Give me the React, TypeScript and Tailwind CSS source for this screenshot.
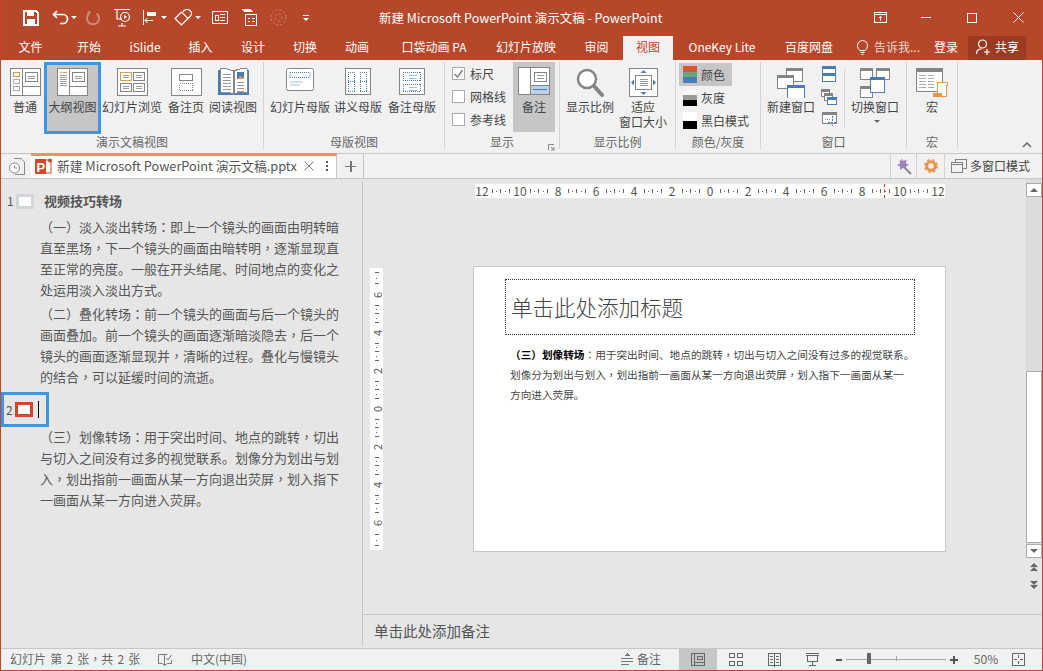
import React from "react"

const G = "#848484"
const O = "#e8964a"
const B = "#4a7db8"
const W = "#ffffff"

const Ico = ({ w, h, children, soft }: { w: number; h: number; children: React.ReactNode; soft?: boolean }) => (
  <svg width={w} height={h} viewBox={`0 0 ${w} ${h}`} fill="none" shapeRendering={soft ? undefined : "crispEdges"} className="block shrink-0">
    {children}
  </svg>
)

const Lines = ({ x, y, w, n, c = G, gap = 2 }: { x: number; y: number; w: number; n: number; c?: string; gap?: number }) => (
  <>
    {Array.from({ length: n }).map((_, i) => (
      <path key={i} d={`M${x} ${y + i * gap + 0.5}h${w}`} stroke={c} />
    ))}
  </>
)

const Dots = ({ d, c = B }: { d: string; c?: string }) => <path d={d} stroke={c} strokeDasharray="1 1" />

// the reference has its commas, colons and brackets centred in the cell, as the TC cut does
const Punct = ({ text }: { text: string }) => (
  <>
    {text.split(/([，：（）])/).map((part, i) =>
      i % 2 === 1 ? (
        <span key={i} className="[font-family:'Noto_Sans_CJK_TC',sans-serif]">
          {part}
        </span>
      ) : (
        part
      ),
    )}
  </>
)

const NormalIcon = () => (
  <Ico w={31} h={28}>
    <rect x=".5" y=".5" width="30" height="27" fill={W} stroke={G} />
    <path d="M12.5 1v26M13 18.5h17" stroke={G} />
    <rect x="3.5" y="4.5" width="6" height="4" stroke={O} />
    <rect x="3.5" y="11.5" width="6" height="4" stroke="#aaa" />
    <rect x="3.5" y="18.5" width="6" height="4" stroke="#aaa" />
    <rect x="15.5" y="4.5" width="12" height="9" stroke={G} />
    <Lines x={18} y={8} w={7} n={2} c="#999" />
  </Ico>
)

const OutlineIcon = () => (
  <Ico w={31} h={28}>
    <rect x=".5" y=".5" width="30" height="27" fill={W} stroke={G} />
    <path d="M12.5 1v26M13 18.5h17" stroke={G} />
    <path d="M3 4.5h2" stroke={O} />
    <path d="M6 4.5h4" stroke={O} />
    <Lines x={3} y={7} w={7} n={6} c="#999" />
    <rect x="15.5" y="4.5" width="12" height="9" stroke={G} />
    <Lines x={18} y={8} w={7} n={2} c="#999" />
  </Ico>
)

const SorterIcon = () => (
  <Ico w={31} h={28}>
    <rect x=".5" y=".5" width="30" height="27" fill={W} stroke={G} />
    <rect x="3.5" y="4.5" width="11" height="8" stroke={O} />
    <rect x="16.5" y="4.5" width="11" height="8" stroke={G} />
    <rect x="3.5" y="15.5" width="11" height="8" stroke={G} />
    <rect x="16.5" y="15.5" width="11" height="8" stroke={G} />
    <Lines x={6} y={7} w={6} n={2} c="#999" />
    <Lines x={19} y={7} w={6} n={2} c="#999" />
    <Lines x={6} y={18} w={6} n={2} c="#999" />
    <Lines x={19} y={18} w={6} n={2} c="#999" />
  </Ico>
)

const NotesPageIcon = () => (
  <Ico w={31} h={28}>
    <rect x=".5" y=".5" width="30" height="27" fill={W} stroke={G} />
    <rect x="8.5" y="6.5" width="13" height="6" stroke={G} />
    <rect x="8.5" y="15.5" width="13" height="7" stroke={G} strokeDasharray="1 1" />
  </Ico>
)

const ReadIcon = () => (
  <Ico w={31} h={28}>
    <path d="M0 2h31v25H0z" fill={B} />
    <path d="M2 1c4-1 9 0 13 2v23c-4-2-9-2-13-1zM29 1c-4-1-9 0-13 2v23c4-2 9-2 13-1z" fill={W} stroke={G} />
    <Lines x={5} y={6} w={8} n={7} c="#999" gap={3} />
    <Lines x={19} y={14} w={7} n={4} c="#999" gap={3} />
    <path d="M19 4h7v7h-7z" fill={B} />
    <path d="M19 11l3-3 2 2 2-2v3z" fill={O} />
  </Ico>
)

const MasterIcon = () => (
  <Ico w={28} h={24} soft>
    <rect x=".5" y=".5" width="27" height="22" rx="2" fill={W} stroke={G} />
    <Dots d="M4 4.5h20M4 9.5h20M4 4.5v5M24 4.5v5" />
    <path d="M4 14h13M4 17h10" stroke="#9fbfe0" />
  </Ico>
)

const HandoutIcon = () => (
  <Ico w={26} h={28}>
    <rect x=".5" y=".5" width="25" height="26" fill={W} stroke={G} />
    <Dots d="M3.5 4v20M9.5 4v20M15.5 4v20M21.5 4v20M3 4.5h7M15 4.5h7M3 13.5h7M15 13.5h7M3 23.5h7M15 23.5h7" />
  </Ico>
)

const NotesMasterIcon = () => (
  <Ico w={26} h={28}>
    <rect x=".5" y=".5" width="25" height="26" fill={W} stroke={G} />
    <Dots d="M4 4.5h18M4 12.5h18M4 16.5h18M4 23.5h18M4.5 4v9M21.5 4v9M4.5 16v8M21.5 16v8" />
    <Lines x={10} y={7} w={8} n={2} c="#9fbfe0" gap={3} />
    <Lines x={10} y={19} w={8} n={2} c="#9fbfe0" gap={3} />
  </Ico>
)

const NotesIcon = () => (
  <Ico w={32} h={28}>
    <rect x=".5" y=".5" width="31" height="27" fill={W} stroke={G} />
    <path d="M12.5 1v26" stroke={G} />
    <rect x="13" y="19" width="18" height="8" fill="#bcd0e6" />
    <path d="M13 18.5h18" stroke={G} />
    <path d="M15 22.5h14" stroke={B} />
    <rect x="16.5" y="5.5" width="12" height="9" stroke={G} />
    <Lines x={19} y={8} w={7} n={2} c="#999" gap={3} />
  </Ico>
)

const ZoomIcon = () => (
  <Ico w={28} h={30} soft>
    <circle cx="11" cy="11" r="9" fill={W} stroke={G} strokeWidth="2.5" />
    <path d="M18 18l8 9" stroke={G} strokeWidth="4" strokeLinecap="round" />
  </Ico>
)

const FitIcon = () => (
  <Ico w={29} h={30}>
    <rect x=".5" y=".5" width="28" height="28" fill={W} stroke={G} />
    <rect x="6.5" y="7.5" width="16" height="14" stroke={G} />
    <Lines x={11} y={11} w={8} n={4} c="#999" gap={2} />
    <path d="M14.5 2l3 3h-6zM14.5 27l3-3h-6zM2 14.5l3-3v6zM27 14.5l-3-3v6z" fill={B} shapeRendering="auto" />
  </Ico>
)

const Swatch = ({ a, b, c, half }: { a: string; b: string; c: string; half?: boolean }) => (
  <span className="flex h-[17px] w-[14px] shrink-0 flex-col">
    <span className="flex-1" style={{ background: a }} />
    {!half && <span className="flex-1" style={{ background: b }} />}
    <span className="flex-1" style={{ background: c }} />
  </span>
)

const Win = ({ x, y, w, h, blue }: { x: number; y: number; w: number; h: number; blue?: boolean }) => (
  <>
    <rect x={x + 0.5} y={y + 0.5} width={w - 1} height={h - 1} fill={W} stroke={blue ? B : G} />
    <rect x={x} y={y} width={w} height={3} fill={blue ? B : G} />
  </>
)

const NewWindowIcon = () => (
  <Ico w={28} h={30}>
    <Win x={9} y={0} w={17} h={14} />
    <Win x={0} y={7} w={17} h={14} />
    <Win x={10} y={17} w={18} h={14} blue />
  </Ico>
)

const SwitchIcon = () => (
  <Ico w={30} h={30}>
    <Win x={0} y={0} w={13} h={12} />
    <Win x={16} y={0} w={14} h={12} />
    <Win x={0} y={18} w={13} h={12} />
    <Win x={10} y={9} w={15} h={16} blue />
  </Ico>
)

const MacroIcon = () => (
  <Ico w={32} h={30}>
    <rect x=".5" y=".5" width="26" height="23" fill={W} stroke={G} />
    <rect x="0" y="0" width="27" height="4" fill={G} />
    <Lines x={3} y={7} w={7} n={5} c="#aaa" gap={3} />
    <Lines x={12} y={7} w={6} n={5} c="#aaa" gap={3} />
    <path d="M21 14h10v3h-1v11H19v-3h2z" fill={W} stroke={O} />
    <path d="M17 25h9v4h-9z" fill={O} />
  </Ico>
)

const RibbonBtn = ({ icon, label, w, active, second }: { icon: React.ReactNode; label: string; w: number; active?: boolean; second?: string }) => (
  <div
    className={`flex h-[72px] shrink-0 flex-col items-center pt-[6px] whitespace-nowrap ${active ? "bg-[#c6c6c6] shadow-[inset_0_0_0_3px_#3a97e6]" : ""}`}
    style={{ width: w }}
  >
    <div className="flex h-[28px] items-start justify-center">{icon}</div>
    <span className="mt-[3px] leading-[15px]">{label}</span>
    {second && <span className="leading-[15px]">{second}</span>}
  </div>
)

const Group = ({ w, label, children, pl = 0 }: { w: number; label: string; children: React.ReactNode; pl?: number }) => (
  <div className="flex h-[87px] shrink-0 flex-col border-r border-[#d4d4d4]" style={{ width: w }}>
    <div className="flex h-[72px]" style={{ paddingLeft: pl }}>
      {children}
    </div>
    <div className="mt-px text-center leading-[14px] text-[#666]">{label}</div>
  </div>
)

const Check = ({ label, checked }: { label: string; checked?: boolean }) => (
  <div className="flex h-[23px] items-center gap-[5px] whitespace-nowrap">
    <span className="flex h-[13px] w-[13px] items-center justify-center border border-[#ababab] bg-white">
      {checked && (
        <svg width="11" height="11" viewBox="0 0 11 11" fill="none">
          <path d="M1.5 6l3 3 5-7" stroke="#777" strokeWidth="1.3" />
        </svg>
      )}
    </span>
    {label}
  </div>
)

const ColorRow = ({ label, a, b, c, active, half }: { label: string; a: string; b: string; c: string; active?: boolean; half?: boolean }) => (
  <div className={`flex h-[23px] w-[53px] items-center gap-[4px] whitespace-nowrap pl-[4px] ${active ? "bg-[#c6c6c6]" : ""}`}>
    <Swatch a={a} b={b} c={c} half={half} />
    {label}
  </div>
)

const tabs: [string, number][] = [
  ["文件", 59],
  ["开始", 58],
  ["iSlide", 54],
  ["插入", 57],
  ["设计", 48],
  ["切换", 56],
  ["动画", 48],
  ["口袋动画 PA", 106],
  ["幻灯片放映", 78],
]

const Ticks = ({ vertical, n = 5 }: { vertical?: boolean; n?: number }) => (
  <div className={`flex flex-1 items-center justify-evenly ${vertical ? "flex-col" : ""}`}>
    {Array.from({ length: n }).map((_, i) =>
      vertical ? (
        <span key={i} className={`h-px bg-[#666] ${i % 2 === 1 ? "w-[1px]" : "w-[4px]"}`} />
      ) : (
        <span key={i} className={`w-px bg-[#666] ${i % 2 === 1 ? "h-[1px]" : "h-[4px]"}`} />
      ),
    )}
  </div>
)

const hLabels = ["12", "10", "8", "6", "4", "2", "0", "2", "4", "6", "8", "10", "12"]
const vLabels = ["6", "4", "2", "0", "2", "4", "6"]

const ViewBtn = ({ active, children }: { active?: boolean; children: React.ReactNode }) => (
  <div className={`flex h-full w-[38px] items-center justify-center ${active ? "bg-[#c6c6c6]" : ""}`}>{children}</div>
)

const outline1 = [
  "（一）淡入淡出转场：即上一个镜头的画面由明转暗",
  "直至黑场，下一个镜头的画面由暗转明，逐渐显现直",
  "至正常的亮度。一般在开头结尾、时间地点的变化之",
  "处运用淡入淡出方式。",
]
const outline2 = [
  "（二）叠化转场：前一个镜头的画面与后一个镜头的",
  "画面叠加。前一个镜头的画面逐渐暗淡隐去，后一个",
  "镜头的画面逐渐显现并，清晰的过程。叠化与慢镜头",
  "的结合，可以延缓时间的流逝。",
]
const outline3 = [
  "（三）划像转场：用于突出时间、地点的跳转，切出",
  "与切入之间没有过多的视觉联系。划像分为划出与划",
  "入，划出指前一画面从某一方向退出荧屏，划入指下",
  "一画面从某一方向进入荧屏。",
]

const Para = ({ lines }: { lines: string[] }) => (
  <div className="pl-[39px] text-[13px] leading-[21px] whitespace-nowrap text-[#555]">
    {lines.map((l) => (
      <div key={l}>
        <Punct text={l} />
      </div>
    ))}
  </div>
)

const Caret = () => <span className="h-0 w-0 border-x-[3px] border-t-[3px] border-x-transparent border-t-white" />

export default function App() {
  return (
    <div className="flex h-[671px] w-[1043px] flex-col overflow-hidden border-x border-b border-[#c8432a] bg-[#e6e6e6] text-[12px] text-[#444] [font-family:'Noto_Sans_CJK_SC','Noto_Sans',sans-serif]">
      {/* title bar */}
      <div className="relative flex h-[35px] shrink-0 items-center bg-[#b7472a] pl-[22px] text-white">
        <Ico w={16} h={16}>
          <path d="M1 1h12l2 2v12H1z" stroke={W} strokeWidth="1.5" />
          <path d="M4 1h7v5H4zM4 9h8v6H4z" fill={W} />
        </Ico>
        <span className="ml-[13px]">
          <Ico w={17} h={15} soft>
            <path d="M5 1L1.5 4.5 5 8M2 4.5h9a4.5 4.5 0 0 1 0 9H8" stroke={W} strokeWidth="1.7" />
          </Ico>
        </span>
        <span className="ml-[2px] flex">
          <Caret />
        </span>
        <span className="ml-[9px]">
          <Ico w={14} h={15} soft>
            <path d="M3.500 3.500a6 6 0 1 0 7 0M3.500 3.500H1M3.500 3.500V1" stroke="#cf8a75" strokeWidth="2" />
          </Ico>
        </span>
        <span className="ml-[14px]">
          <Ico w={18} h={19} soft>
            <path d="M0 1.500h16M3 2v9h5M8 15v3M4 18h8" stroke={W} strokeWidth="1.2" />
            <circle cx="11" cy="9" r="4.500" stroke={W} strokeWidth="1.2" />
            <path d="M10 7l3 2-3 2z" fill={W} />
          </Ico>
        </span>
        <span className="ml-[11px]">
          <Ico w={13} h={15} soft>
            <path d="M.5 0v15" stroke={W} />
            <path d="M4 2h9v4H4z" fill={W} />
            <path d="M2 10.500h8M4.500 8l-2.500 2.500 2.500 2.500" stroke={W} />
          </Ico>
        </span>
        <span className="ml-[5px] flex">
          <Caret />
        </span>
        <span className="ml-[7px]">
          <Ico w={19} h={17} soft>
            <path d="M1 9.500l6.500-6.500 6.500 6.500-6.500 6.500z" stroke={W} strokeWidth="1.200" />
            <path d="M9 3c1-3 5-3 7-1.500s2 4 0 6l-3 3" stroke={W} strokeWidth="1.200" />
          </Ico>
        </span>
        <span className="ml-[2px] flex">
          <Caret />
        </span>
        <span className="ml-[11px]">
          <Ico w={16} h={13}>
            <rect x=".5" y=".5" width="15" height="12" stroke={W} />
            <path d="M3 4h3v5H3zM8 3.500h5M8 6.500h5M8 9.500h5" stroke={W} />
          </Ico>
        </span>
        <span className="ml-[13px]">
          <Ico w={17} h={17}>
            <path d="M0 0h9l3 3H3z" fill={W} />
            <rect x="4.500" y="5.500" width="11" height="11" fill="#b7472a" stroke={W} />
            <path d="M7 9h2M11 9h3M7 12h2M11 12h3" stroke={W} />
          </Ico>
        </span>
        <span className="ml-[12px]">
          <Ico w={17} h={17} soft>
            <circle cx="8.500" cy="8.500" r="7.500" stroke="#cf8a75" strokeDasharray="2 2" />
            <circle cx="8.500" cy="8.500" r="3.500" stroke="#cf8a75" strokeDasharray="2 2" />
          </Ico>
        </span>
        <span className="ml-[16px] flex flex-col items-center gap-[2px]">
          <span className="h-px w-[6px] bg-white" />
          <Caret />
        </span>
        <div className="absolute top-[9px] left-[378px] text-[12.5px] leading-[18px] whitespace-nowrap">
          新建 Microsoft PowerPoint 演示文稿 - PowerPoint
        </div>
        <div className="ml-auto flex items-center">
          <Ico w={13} h={11}>
            <rect x=".5" y=".5" width="12" height="10" stroke={W} />
            <path d="M0 2.500h13M6.500 9V5M4.500 6.500l2-2 2 2" stroke={W} />
          </Ico>
          <div className="ml-[34px] h-px w-[10px] bg-white" />
          <div className="ml-[36px] h-[10px] w-[10px] border border-white" />
          <span className="ml-[36px] mr-[18px]">
            <Ico w={11} h={11} soft>
              <path d="M.5.500l10 10M10.500.500l-10 10" stroke={W} />
            </Ico>
          </span>
        </div>
      </div>

      {/* ribbon tabs */}
      <div className="flex h-[25px] shrink-0 items-end bg-[#b7472a] text-white">
        {tabs.map(([t, w]) => (
          <div key={t} className="flex h-[24px] items-center justify-center whitespace-nowrap pb-[2px]" style={{ width: w }}>
            {t}
          </div>
        ))}
        <div className="flex h-[24px] w-[58px] items-center justify-center pb-[2px] pl-[5px]">审阅</div>
        <div className="flex h-[24px] w-[50px] items-center justify-center bg-[#f1f1f1] pb-[2px] text-[#c8432a]">视图</div>
        <div className="flex h-[24px] w-[98px] items-center justify-center whitespace-nowrap pb-[2px]">OneKey Lite</div>
        <div className="flex h-[24px] w-[62px] items-center justify-center whitespace-nowrap pb-[2px] pl-[14px]">百度网盘</div>
        <div className="ml-[24px] flex h-[24px] items-center pb-[2px]">
          <Ico w={11} h={15} soft>
            <path d="M3 10.500C1 9 .5 7.500.5 5.500a5 5 0 0 1 10 0c0 2-.5 3.500-2.500 5zM3.500 12.500h4M4.500 14.500h2" stroke={W} />
          </Ico>
          <span className="ml-[6px] w-[45px] whitespace-nowrap text-[#f0d5cc]">告诉我...</span>
          <span className="ml-[15px] w-[24px] whitespace-nowrap">登录</span>
        </div>
        <div className="ml-[10px] flex h-[24px] w-[58px] items-center bg-[#9c3b22] pb-[2px] pl-[8px]">
          <Ico w={15} h={16} soft>
            <circle cx="6.500" cy="5" r="4" stroke={W} strokeWidth="1.200" />
            <path d="M.5 15c0-3 2-5 5-5M8 13h6M11 10v6" stroke={W} strokeWidth="1.200" />
          </Ico>
          <span className="ml-[4px] whitespace-nowrap">共享</span>
        </div>
      </div>

      {/* ribbon */}
      <div className="relative flex h-[93px] shrink-0 bg-[#f1f1f1] pt-[2px]">
        <Group w={263} label="演示文稿视图" pl={5}>
          <RibbonBtn w={38} label="普通" icon={<NormalIcon />} />
          <RibbonBtn w={57} active label="大纲视图" icon={<OutlineIcon />} />
          <RibbonBtn w={62} label="幻灯片浏览" icon={<SorterIcon />} />
          <RibbonBtn w={46} label="备注页" icon={<NotesPageIcon />} />
          <RibbonBtn w={48} label="阅读视图" icon={<ReadIcon />} />
        </Group>
        <Group w={181} label="母版视图" pl={5}>
          <RibbonBtn w={62} label="幻灯片母版" icon={<MasterIcon />} />
          <RibbonBtn w={54} label="讲义母版" icon={<HandoutIcon />} />
          <RibbonBtn w={54} label="备注母版" icon={<NotesMasterIcon />} />
        </Group>
        <div className="relative">
          <Group w={115} label="显示" pl={7}>
            <div className="flex w-[61px] shrink-0 flex-col">
              <Check checked label="标尺" />
              <Check label="网格线" />
              <Check label="参考线" />
            </div>
            <div className="flex h-[70px] w-[42px] flex-col items-center bg-[#c6c6c6] pt-[5px]">
              <NotesIcon />
              <span className="mt-[4px] leading-[15px]">备注</span>
            </div>
          </Group>
          <svg width="7" height="7" viewBox="0 0 7 7" fill="none" className="absolute right-[5px] bottom-[2px]">
            <path d="M.5 6V.5H6M3 3l3 3M6 3v3H3" stroke="#888" />
          </svg>
        </div>
        <Group w={116} label="显示比例" pl={3}>
          <RibbonBtn w={54} label="显示比例" icon={<ZoomIcon />} />
          <RibbonBtn w={52} label="适应" second="窗口大小" icon={<FitIcon />} />
        </Group>
        <Group w={85} label="颜色/灰度" pl={3}>
          <div className="flex flex-col pt-[1px]">
            <ColorRow active label="颜色" a="#d9542f" b="#6ba57f" c="#4a7db8" />
            <ColorRow label="灰度" a="#f6f6f6" b="#999999" c="#000000" />
            <ColorRow half label="黑白模式" a="#ffffff" b="#ffffff" c="#000000" />
          </div>
        </Group>
        <Group w={146} label="窗口" pl={4}>
          <RibbonBtn w={52} label="新建窗口" icon={<NewWindowIcon />} />
          <div className="flex w-[24px] flex-col items-center gap-[7px] pt-[4px]">
            <Ico w={14} h={16}>
              <rect x=".5" y=".5" width="13" height="15" fill={W} stroke={B} />
              <rect x="0" y="0" width="14" height="3" fill={B} />
              <rect x="0" y="7" width="14" height="3" fill={B} />
            </Ico>
            <Ico w={16} h={16}>
              <Win x={0} y={0} w={9} h={8} />
              <Win x={3} y={4} w={9} h={8} />
              <Win x={6} y={8} w={10} h={8} blue />
            </Ico>
            <Ico w={15} h={15}>
              <rect x=".5" y=".5" width="14" height="11" fill={W} stroke={G} />
              <rect x="0" y="0" width="15" height="3" fill={G} />
              <path d="M3 7.500h5" stroke={G} strokeDasharray="1 1" />
              <path d="M10 4v10M6 10h9" stroke={B} strokeDasharray="2 1" />
            </Ico>
          </div>
          <div className="my-[7px] mr-[4px] ml-[3px] w-px bg-[#d4d4d4]" />
          <div className="flex w-[52px] flex-col items-center">
            <RibbonBtn w={52} label="切换窗口" icon={<SwitchIcon />} />
          </div>
        </Group>
        <Group w={51} label="宏" pl={8}>
          <RibbonBtn w={34} label="宏" icon={<MacroIcon />} />
        </Group>
        <svg width="10" height="6" viewBox="0 0 10 6" fill="none" className="absolute right-[10px] bottom-[5px]">
          <path d="M1 5l4-4 4 4" stroke="#666" strokeWidth="1.500" />
        </svg>
        <span className="absolute top-[60px] left-[873px] h-0 w-0 border-x-[3px] border-t-[3px] border-x-transparent border-t-[#666]" />
      </div>

      {/* document tabs */}
      <div className="flex h-[26px] shrink-0 border-y border-[#c6c6c6] bg-[#f1f1f1]">
        <div className="flex w-[30px] items-center justify-center pl-[1px]">
          <Ico w={16} h={17} soft>
            <path d="M5 .5h7l3.500 3.500v12.500H6" stroke="#888" />
            <circle cx="5.500" cy="10" r="5" fill={W} stroke="#888" />
            <path d="M5.500 7v3h3" stroke="#888" />
          </Ico>
        </div>
        <div className="-mt-px flex w-[306px] items-center border-t-[3px] border-r border-[#e8936c] border-r-[#c6c6c6] bg-white pb-[2px] pl-[4px] text-[12.750px] whitespace-nowrap">
          <svg width="18" height="17" viewBox="0 0 18 17" fill="none" className="shrink-0">
            <rect x="7" y="2" width="9" height="13" fill={W} stroke="#d24726" />
            <circle cx="15" cy="2.500" r="2" fill="#d24726" />
            <rect x="0" y="1" width="11" height="15" fill="#d24726" />
            <text x="1.500" y="13.500" fill="#ffffff" fontSize="13" fontWeight="700" fontFamily="Liberation Sans, sans-serif">
              P
            </text>
          </svg>
          <span className="ml-[4px] w-[240px] text-[#555]">新建 Microsoft PowerPoint 演示文稿.pptx</span>
          <span className="ml-[7px]">
            <Ico w={10} h={10} soft>
              <path d="M.5.500l9 9M9.500.500l-9 9" stroke="#777" />
            </Ico>
          </span>
          <span className="ml-[12px] flex flex-col gap-[2px]">
            <span className="h-[2px] w-[2px] bg-[#555]" />
            <span className="h-[2px] w-[2px] bg-[#555]" />
            <span className="h-[2px] w-[2px] bg-[#555]" />
          </span>
        </div>
        <div className="flex w-[27px] items-center justify-center border-r border-[#c6c6c6]">
          <Ico w={11} h={11}>
            <path d="M5 0h1.500v11H5zM0 4.800h11v1.400H0z" fill="#777" />
          </Ico>
        </div>
        <div className="flex-1" />
        <div className="flex w-[26px] items-center justify-center border-l border-[#d4d4d4]">
          <Ico w={17} h={17} soft>
            <path d="M6.500 0l1.800 3 3.200-1.200-.6 3.400L14 7l-3 1.200.2 3.400L8 10l-3 2 .2-3.500L2 7l3.200-1.800L4.500 1.800 6.800 3z" fill="#9b7fc0" />
            <path d="M10 10l6 6" stroke="#888" strokeWidth="2" />
          </Ico>
        </div>
        <div className="flex w-[28px] items-center justify-center border-l border-[#d4d4d4]">
          <Ico w={14} h={14} soft>
            <circle cx="7" cy="7" r="4.300" stroke="#ed9148" strokeWidth="3" />
            <circle cx="7" cy="7" r="6.300" stroke="#ed9148" strokeWidth="1.500" strokeDasharray="2.500 2.500" />
          </Ico>
        </div>
        <div className="flex w-[98px] items-center border-l border-[#d4d4d4] pb-[1px] pl-[6px] whitespace-nowrap">
          <Ico w={16} h={14}>
            <rect x="4.500" y=".5" width="11" height="9" stroke={G} />
            <rect x=".5" y="3.500" width="11" height="10" fill="#f1f1f1" stroke={G} />
            <path d="M1 5.500h10" stroke={G} />
          </Ico>
          <span className="ml-[3px]">多窗口模式</span>
        </div>
      </div>

      {/* work area */}
      <div className="flex min-h-0 flex-1">
        {/* outline pane */}
        <div className="my-[2px] w-[362px] shrink-0 border-r border-[#c6c6c6] pt-[11px]">
          <div className="flex h-[18px] items-center pl-[6px] text-[#555]">
            <span className="w-[9px]">1</span>
            <span className="h-[15px] w-[18px] border-[3px] border-[#d2d6da] bg-white" />
            <span className="ml-[10px] text-[13px] font-bold whitespace-nowrap">视频技巧转场</span>
          </div>
          <div className="mt-[6px]">
            <Para lines={outline1} />
          </div>
          <div className="mt-[3px]">
            <Para lines={outline2} />
          </div>
          <div className="mt-[5px] flex h-[35px] w-[48px] items-center border-[3px] border-[#3a97e6] pl-[2px] text-[#555]">
            <span className="w-[9px]">2</span>
            <span className="h-[15px] w-[18px] border-[3px] border-[#d24726] bg-white" />
            <span className="ml-[5px] h-[17px] w-px bg-black" />
          </div>
          <div className="-mt-px">
            <Para lines={outline3} />
          </div>
        </div>

        {/* editor */}
        <div className="flex min-w-0 flex-1 flex-col">
          <div className="flex min-h-0 flex-1">
            <div className="flex-1">
              <div className="pt-[5px] pl-[112px]">
                <div className="relative flex h-[14px] w-[470px] bg-white text-[12px] leading-[13px] text-[#555]">
                  {hLabels.map((l, i) => (
                    <React.Fragment key={i}>
                      <span className="flex w-[14px] shrink-0 justify-center">{l}</span>
                      {i < hLabels.length - 1 && <Ticks />}
                    </React.Fragment>
                  ))}
                  <span className="absolute top-0 left-[409px] h-[14px] border-l border-dashed border-[#d24726]" />
                </div>
              </div>
              <div className="mt-[68px] flex">
                <div className="mt-[2px] ml-[7px] flex h-[282px] w-[13px] shrink-0 flex-col bg-white text-[11px] leading-[14px] text-[#555]">
                  <div className="flex h-[20px] flex-col">
                    <Ticks vertical n={3} />
                  </div>
                  {vLabels.map((l, i) => (
                    <React.Fragment key={i}>
                      <span className="flex h-[14px] -rotate-90 justify-center">{l}</span>
                      {i < vLabels.length - 1 && (
                        <div className="flex h-[24px] flex-col">
                          <Ticks vertical />
                        </div>
                      )}
                    </React.Fragment>
                  ))}
                  <div className="flex h-[20px] flex-col">
                    <Ticks vertical n={3} />
                  </div>
                </div>
                <div className="ml-[90px] h-[286px] w-[473px] shrink-0 border border-[#c6c6c6] bg-white pt-[12px] pl-[31px]">
                  <div className="flex h-[56px] w-[410px] items-center border border-dotted border-[#333] pl-[5px] text-[21.500px] font-light text-[#444]">
                    单击此处添加标题
                  </div>
                  <div className="mt-[10px] pl-[5px] text-[10.650px] leading-[20px] whitespace-nowrap text-[#444]">
                    <div>
                      <b className="text-black">
                        <Punct text="（三）划像转场" />
                      </b>
                      <Punct text="：用于突出时间、地点的跳转，切出与切入之间没有过多的视觉联系。" />
                    </div>
                    <div>
                      <Punct text="划像分为划出与划入，划出指前一画面从某一方向退出荧屏，划入指下一画面从某一" />
                    </div>
                    <div>方向进入荧屏。</div>
                  </div>
                </div>
              </div>
            </div>
            {/* scrollbar */}
            <div className="flex w-[16px] shrink-0 flex-col items-center">
              <div className="flex h-[379px] w-full flex-col bg-[#dcdcdc] pt-[4px]">
                <div className="flex h-[14px] items-center justify-center border border-[#ababab] bg-white">
                  <span className="h-0 w-0 border-x-[4px] border-b-[4px] border-x-transparent border-b-[#666]" />
                </div>
                <div className="flex-1" />
                <div className="h-[172px] border border-[#ababab] bg-white" />
                <div className="mt-px flex h-[14px] items-center justify-center border border-[#ababab] bg-white">
                  <span className="h-0 w-0 border-x-[4px] border-t-[4px] border-x-transparent border-t-[#666]" />
                </div>
              </div>
              <div className="mt-[5px] flex flex-col items-center">
                <span className="h-0 w-0 border-x-[4px] border-b-[4px] border-x-transparent border-b-[#666]" />
                <span className="h-0 w-0 border-x-[4px] border-b-[4px] border-x-transparent border-b-[#666]" />
              </div>
              <div className="mt-[10px] flex flex-col items-center">
                <span className="h-0 w-0 border-x-[4px] border-t-[4px] border-x-transparent border-t-[#666]" />
                <span className="h-0 w-0 border-x-[4px] border-t-[4px] border-x-transparent border-t-[#666]" />
              </div>
            </div>
          </div>
          <div className="flex h-[34px] shrink-0 items-center border-t border-[#c6c6c6] pb-[2px] pl-[11px] text-[14.500px] text-[#555]">
            单击此处添加备注
          </div>
        </div>
      </div>

      {/* status bar */}
      <div className="flex h-[22px] shrink-0 items-center border-t border-[#c6c6c6] bg-[#f1f1f1] whitespace-nowrap text-[#666]">
        <span className="mb-px ml-[9px] w-[130px] [word-spacing:1.500px]">
          <Punct text="幻灯片 第 2 张，共 2 张" />
        </span>
        <span className="ml-[18px]">
          <Ico w={14} h={13} soft>
            <path d="M6.500 1.500H.5v9h4l2 2V1.500zM6.500 1.500h3M13.500 7v3.500h-4l-3 2" stroke="#777" />
            <path d="M8 5l2 2 3.500-5" stroke="#777" />
          </Ico>
        </span>
        <span className="mb-px ml-[19px] w-[56px]">中文(中国)</span>
        <div className="ml-auto flex h-full items-center">
          <div className="flex w-[58px] items-center">
            <Ico w={12} h={13}>
              <path d="M6 0l3 3H3z" fill="#777" />
              <path d="M0 5.500h12M0 8.500h12M0 11.500h8" stroke="#777" />
            </Ico>
            <span className="mb-px ml-[4px]">备注</span>
          </div>
          <ViewBtn active>
            <Ico w={14} h={13}>
              <rect x=".5" y=".5" width="13" height="12" stroke="#666" />
              <path d="M3.500 1v11M4 9.500h9" stroke="#666" />
              <rect x="6.500" y="3.500" width="5" height="3" stroke="#666" />
            </Ico>
          </ViewBtn>
          <ViewBtn>
            <Ico w={14} h={13}>
              <rect x=".5" y=".5" width="5" height="4" stroke="#666" />
              <rect x="8.500" y=".5" width="5" height="4" stroke="#666" />
              <rect x=".5" y="8.500" width="5" height="4" stroke="#666" />
              <rect x="8.500" y="8.500" width="5" height="4" stroke="#666" />
            </Ico>
          </ViewBtn>
          <ViewBtn>
            <Ico w={13} h={14}>
              <rect x=".5" y=".5" width="12" height="12" stroke="#666" />
              <path d="M6.500 0v14M2 3.500h3M2 6.500h3M2 9.500h3M8 3.500h3M8 6.500h3M8 9.500h3" stroke="#666" />
            </Ico>
          </ViewBtn>
          <ViewBtn>
            <Ico w={13} h={13}>
              <path d="M0 .5h13M0 2.500h13M1.500 3v5.500h10V3M6.500 9v3M3 12.500h7" stroke="#666" />
            </Ico>
          </ViewBtn>
          <div className="flex w-[15px] justify-center">
            <span className="h-[2px] w-[6px] bg-[#555]" />
          </div>
          <div className="relative flex h-full w-[100px] items-center">
            <span className="h-px w-full bg-[#a8a8a8]" />
            <span className="absolute top-[7px] left-[50px] h-[5px] w-px bg-[#a8a8a8]" />
            <span className="absolute top-[4px] left-[21px] h-[11px] w-[4px] bg-[#666]" />
          </div>
          <div className="flex w-[16px] justify-center">
            <Ico w={8} h={8}>
              <path d="M3 0h2v8H3zM0 3h8v2H0z" fill="#555" />
            </Ico>
          </div>
          <span className="mb-px w-[48px] text-center">50%</span>
          <div className="mr-[16px] flex w-[16px] justify-center">
            <Ico w={13} h={13}>
              <rect x=".5" y=".5" width="12" height="12" stroke="#666" />
              <path d="M6.500 2v3M6.500 8v3M2 6.500h3M8 6.500h3" stroke="#666" />
            </Ico>
          </div>
        </div>
      </div>
    </div>
  )
}
